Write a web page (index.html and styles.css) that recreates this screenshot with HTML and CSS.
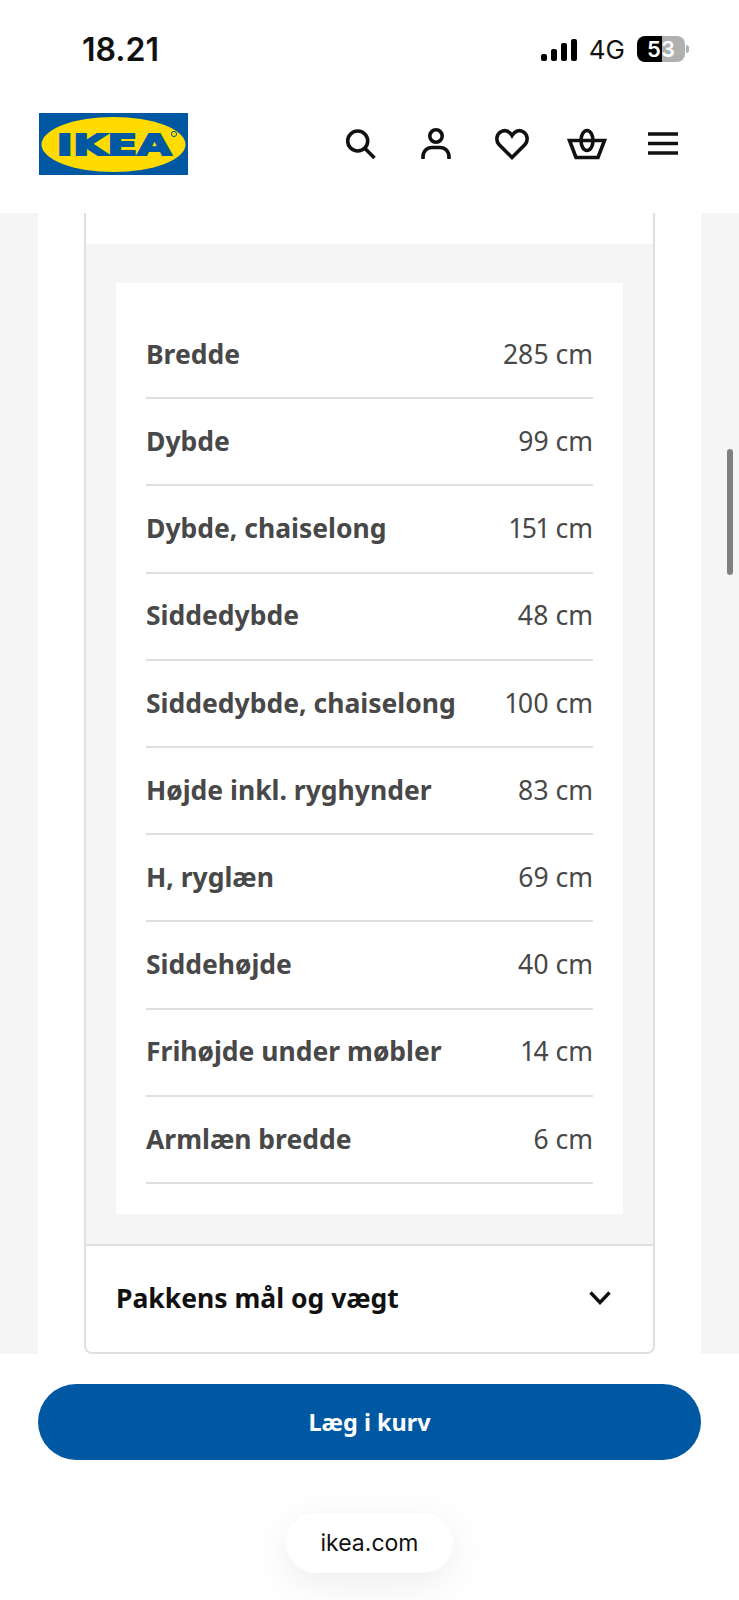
FILE: index.html
```html
<!DOCTYPE html>
<html lang="da">
<head>
  <meta charset="UTF-8" />
  <meta name="viewport" content="width=device-width, initial-scale=1.0" />
  <title>IKEA</title>
  <link rel="stylesheet" href="styles.css">
</head>
<body>
  <!-- status bar -->
  <div class="status">
    <span class="time">18.21</span>
    <div class="status-right">
      <div class="signal"><i class="b1"></i><i class="b2"></i><i class="b3"></i><i class="b4"></i></div>
      <span class="net">4G</span>
      <div class="battery">53</div>
      <div class="nub"></div>
    </div>
  </div>

  <!-- header -->
  <header class="header">
    <svg class="logo" viewBox="0 0 149 62" width="149" height="62">
      <rect width="149" height="62" fill="#0058a3"/>
      <ellipse cx="74.5" cy="31.5" rx="72" ry="27.5" fill="#ffdb00"/>
      <text x="17.500" y="41.500" class="logo-text" textLength="115" lengthAdjust="spacingAndGlyphs">IKEA</text>
      <circle cx="135" cy="21" r="2.6" fill="none" stroke="#0058a3" stroke-width="1"/>
    </svg>
    <nav class="icons">
      <svg viewBox="0 0 40 40" width="40" height="40"><circle cx="16.7" cy="17" r="10" /><path d="M24 24.5L33.5 34" /></svg>
      <svg viewBox="0 0 40 40" width="40" height="40"><circle cx="20" cy="12" r="6.2" /><path d="M7 35v-2c0-6 4-9.500 9-9.500h8c5 0 9 3.500 9 9.500v2" /></svg>
      <svg viewBox="0 0 40 40" width="40" height="40"><path d="M20 33.500L7 20.500C3.500 16.500 4.500 10.500 8.500 8c4-2.500 8.500-1.500 11.500 3.500c3-5 7.500-6 11.500-3.500c4 2.500 5 8.500 1.500 12.500z" /></svg>
      <svg viewBox="0 0 40 40" width="40" height="40"><path d="M2.500 16.500h35L31 33.500H9z" /><ellipse cx="20" cy="16.500" rx="6" ry="10" /></svg>
      <svg viewBox="0 0 40 40" width="40" height="40"><path d="M5 10h30M5 19.500h30M5 29h30" /></svg>
    </nav>
  </header>

  <!-- page content -->
  <main class="main">
    <div class="column">
      <div class="card">
        <div class="card-top"></div>
        <div class="panel">
          <div class="table">
            <div class="row"><span class="name">Bredde</span><span class="val">285 cm</span></div>
            <div class="row"><span class="name">Dybde</span><span class="val">99 cm</span></div>
            <div class="row"><span class="name">Dybde, chaiselong</span><span class="val">151 cm</span></div>
            <div class="row"><span class="name">Siddedybde</span><span class="val">48 cm</span></div>
            <div class="row"><span class="name">Siddedybde, chaiselong</span><span class="val">100 cm</span></div>
            <div class="row"><span class="name">Højde inkl. ryghynder</span><span class="val">83 cm</span></div>
            <div class="row"><span class="name">H, ryglæn</span><span class="val">69 cm</span></div>
            <div class="row"><span class="name">Siddehøjde</span><span class="val">40 cm</span></div>
            <div class="row"><span class="name">Frihøjde under møbler</span><span class="val">14 cm</span></div>
            <div class="row"><span class="name">Armlæn bredde</span><span class="val">6 cm</span></div>
          </div>
        </div>
        <div class="accordion">
          <span class="acc-title">Pakkens mål og vægt</span>
          <svg class="chevron" viewBox="0 0 24 16" width="24" height="16"><path d="M2.500 2.500l9.500 10l9.500-10" /></svg>
        </div>
      </div>
    </div>
  </main>

  <!-- bottom bar -->
  <div class="bottom">
    <button class="buy">Læg i kurv</button>
    <div class="url">ikea.com</div>
  </div>

  <div class="scrollbar"></div>
</body>
</html>
```

FILE: styles.css
```css
html, body {
  margin: 0;
  padding: 0;
}
body {
  position: relative;
  width: 739px;
  height: 1600px;
  overflow: hidden;
  background: #fff;
  font-family: "Noto Sans", sans-serif;
  display: flex;
  flex-direction: column;
}

/* status bar */
.status {
  height: 100px;
  flex: none;
  display: flex;
  justify-content: space-between;
  align-items: center;
  padding: 0 50px 2px 82px;
  box-sizing: border-box;
}
.time {
  font-family: Inter, sans-serif;
  font-size: 32px;
  font-weight: 600;
  color: #111;
}
.status-right {
  display: flex;
  align-items: center;
}
.signal {
  display: flex;
  align-items: flex-end;
  gap: 4px;
  height: 23px;
  margin-right: 12px;
}
.signal i {
  display: block;
  width: 6px;
  background: #000;
  border-radius: 2px;
}
.b1 { height: 7px; }
.b2 { height: 12px; }
.b3 { height: 18px; }
.b4 { height: 22px; }
.net {
  font-family: Inter, sans-serif;
  font-size: 26px;
  color: #111;
  margin-right: 12px;
}
.battery {
  width: 48px;
  height: 26px;
  border-radius: 8px;
  background: linear-gradient(to right, #000 52%, #b0b0b0 52%);
  color: #fff;
  font-family: Inter, sans-serif;
  font-size: 22px;
  font-weight: 600;
  line-height: 26px;
  text-align: center;
}
.nub {
  width: 3px;
  height: 8px;
  margin-left: 1px;
  background: #b0b0b0;
  border-radius: 0 3px 3px 0;
}

/* header */
.header {
  height: 113px;
  flex: none;
  box-sizing: border-box;
  display: flex;
  justify-content: space-between;
  align-items: center;
  padding: 0 56px 25px 39px;
}
.logo {
  display: block;
}
.logo-text {
  font-family: "DejaVu Sans", sans-serif;
  font-weight: 700;
  font-size: 29px;
  fill: #0058a3;
  stroke: #0058a3;
  stroke-width: 1.8;
}
.icons {
  display: flex;
  gap: 35.6px;
}
.icons svg {
  display: block;
  fill: none;
  stroke: #111;
  stroke-width: 3.6;
}

/* content */
.main {
  height: 1141px;
  flex: none;
  overflow: hidden;
  background: #f5f5f5;
  padding: 0 38px;
}
.column {
  height: 100%;
  background: #fff;
  padding: 0 46px;
}
.card {
  height: 100%;
  box-sizing: border-box;
  border: 2px solid #e0e0e0;
  border-top: none;
  border-radius: 0 0 8px 8px;
  display: flex;
  flex-direction: column;
}
.card-top {
  height: 31px;
  flex: none;
}
.panel {
  background: #f5f5f5;
  padding: 39px 30px 30px;
  border-bottom: 2px solid #e0e0e0;
}
.table {
  background: #fff;
  padding: 29px 30px 30px;
}
.row {
  height: 87.2px;
  box-sizing: border-box;
  display: flex;
  justify-content: space-between;
  align-items: center;
  padding-bottom: 1.5px;
  border-bottom: 2px solid #dfdfdf;
  font-size: 26.5px;
  color: #484848;
  font-variant-numeric: proportional-nums;
}
.name {
  font-weight: 700;
}
.accordion {
  flex: 1;
  display: flex;
  justify-content: space-between;
  align-items: center;
  padding: 0 41px 2px 30px;
}
.acc-title {
  font-size: 26.5px;
  font-weight: 700;
  color: #111;
}
.chevron {
  fill: none;
  stroke: #111;
  stroke-width: 3.4;
}

/* bottom bar */
.bottom {
  flex: 1;
  display: flex;
  flex-direction: column;
  align-items: center;
  padding: 30px 38px 0;
}
.buy {
  width: 100%;
  height: 76px;
  flex: none;
  border: none;
  border-radius: 38px;
  background: #0058a3;
  color: #fff;
  font-family: "Noto Sans", sans-serif;
  font-size: 23.4px;
  font-weight: 700;
}
.url {
  margin-top: 53px;
  width: 167px;
  height: 60px;
  border-radius: 30px;
  background: #fff;
  box-shadow: 0 10px 40px rgba(0, 0, 0, 0.08);
  display: flex;
  align-items: center;
  justify-content: center;
  font-family: Inter, sans-serif;
  font-size: 23px;
  color: #111;
}

.scrollbar {
  position: absolute;
  left: 727px;
  top: 449px;
  width: 6px;
  height: 126px;
  border-radius: 3px;
  background: #808080;
}
```
